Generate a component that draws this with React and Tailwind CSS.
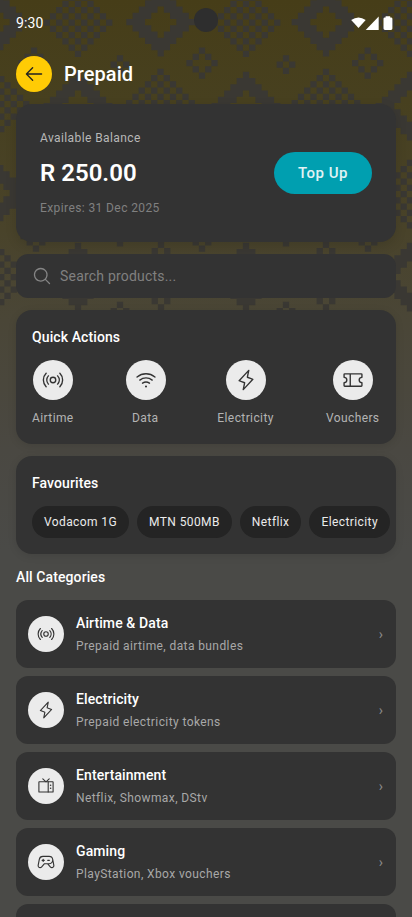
import React from "react";
import {
  PiArrowLeft,
  PiMagnifyingGlass,
  PiBroadcast,
  PiWifiHigh,
  PiLightning,
  PiTicket,
  PiGameController,
} from "react-icons/pi";

const CELL = 6.25;

const inShape = {
  checker: (x, y) => Math.abs(x) + Math.abs(y) <= 5 && Math.abs(x + y) % 2 === 1,
  solid: (x, y) => Math.abs(x) + Math.abs(y) <= 5 && Math.abs(x) + Math.abs(y) > 2,
  ring: (x, y) => Math.abs(x) + Math.abs(y) === 2,
  plus: (x, y) => Math.abs(x) + Math.abs(y) === 1,
};

const motifs = [
  ["solid", -6, 22], ["checker", 78, 22.5], ["solid", 160.7, 22], ["checker", 246, 22.5], ["solid", 326, 22], ["checker", 410, 22.5],
  ["ring", 34, 63], ["plus", 120, 64.5], ["ring", 202, 63], ["plus", 286, 64.5], ["ring", 367.7, 63],
  ["checker", -5, 104], ["solid", 78, 106], ["checker", 160.5, 103], ["solid", 246, 106], ["checker", 326, 103], ["solid", 410, 106],
  ["solid", -6, 193], ["checker", 410, 194],
  ["ring", 36, 236], ["plus", 120, 237], ["ring", 202, 236], ["plus", 286, 237], ["ring", 368, 236],
  ["checker", -5, 277], ["solid", 78, 277], ["checker", 161, 276], ["solid", 246, 277], ["checker", 326, 276], ["solid", 410, 277],
  ["plus", 120, 311], ["plus", 286, 311],
];

function cellPath([shape, cx, cy]) {
  let d = "";
  for (let y = -5; y <= 5; y++)
    for (let x = -5; x <= 5; x++)
      if (inShape[shape](x, y))
        d += `M${cx + (x - 0.5) * CELL} ${cy + (y - 0.5) * CELL}h${CELL}v${CELL}h-${CELL}z`;
  return d;
}

function Pattern() {
  return (
    <svg className="absolute left-0 top-0" width="412" height="320" viewBox="0 0 412 320">
      <path d={motifs.map(cellPath).join("")} fill="#3a3833" />
    </svg>
  );
}

function TvIcon({ size }) {
  return (
    <svg width={size} height={size} viewBox="0 0 18 18" fill="none" stroke="currentColor" strokeWidth="1.1" strokeLinejoin="round" strokeLinecap="round">
      <rect x="1.9" y="4.8" width="14.2" height="10.2" rx="0.3" />
      <path d="M11.2 4.8v10.2M5.8 1.9L9 4.8l3.2-2.9" />
      <circle cx="13.6" cy="8.3" r="0.8" fill="currentColor" stroke="none" />
      <circle cx="13.6" cy="11.3" r="0.8" fill="currentColor" stroke="none" />
    </svg>
  );
}

const actions = [
  ["Airtime", PiBroadcast],
  ["Data", PiWifiHigh],
  ["Electricity", PiLightning],
  ["Vouchers", PiTicket],
];

const favourites = ["Vodacom 1G", "MTN 500MB", "Netflix", "Electricity"];

const categories = [
  ["Airtime & Data", "Prepaid airtime, data bundles", PiBroadcast],
  ["Electricity", "Prepaid electricity tokens", PiLightning],
  ["Entertainment", "Netflix, Showmax, DStv", TvIcon],
  ["Gaming", "PlayStation, Xbox vouchers", PiGameController],
];

function StatusBar() {
  return (
    <div className="flex h-12 items-center justify-between pl-4 pr-[18px]">
      <span className="-mt-0.5 text-[14px] leading-5 tracking-[0.14px] text-white">9:30</span>
      <svg width="43" height="16" viewBox="0 0 43 16" fill="#fff" className="mt-[-2px]">
        <path d="M0.2 5Q7.5 0 14.7 5L7.5 13.1z" />
        <path d="M27.7 1.6v13.4H14.7z" />
        <path d="M34.6 1.2h4.6v1.2h.8q1.4 0 1.4 1.4v9.8q0 1.4-1.4 1.4h-6q-1.5 0-1.5-1.4V3.8q0-1.4 1.4-1.4h.7z" />
      </svg>
    </div>
  );
}

export default function App() {
  return (
    <div className="relative h-[917px] w-[412px] overflow-hidden bg-[linear-gradient(180deg,#463d18_0px,#47401f_100px,#49432a_230px,#4a4637_320px,#4a4842_450px,#4a4a47_550px,#4a4a47_917px)] font-['Roboto',sans-serif] text-white">
      <Pattern />
      <div className="absolute left-[194px] top-2 size-6 rounded-full bg-[#2e2e2e]" />
      <div className="relative flex flex-col">
        <StatusBar />
        <header className="flex h-14 items-center gap-3 px-4 pb-1">
          <button className="flex size-9 items-center justify-center rounded-full bg-[#ffcb05] text-[#222]">
            <PiArrowLeft size={22} />
          </button>
          <h1 className="text-[20px] font-medium leading-6 tracking-[0.05px]">Prepaid</h1>
        </header>

        <main className="flex flex-col gap-3 px-4">
          <section className="flex h-[138px] items-center justify-between rounded-2xl bg-[#333] px-6 shadow-[0_4px_12px_rgba(0,0,0,0.12)]">
            <div className="flex flex-col">
              <span className="-mt-px text-[12px] leading-4 tracking-[0.4px] text-[#b8b8b8]">Available Balance</span>
              <span className="mt-[11px] text-[24px] font-semibold leading-8">R 250.00</span>
              <span className="mt-[11px] text-[12px] leading-4 tracking-[0.4px] text-[#808080]">Expires: 31 Dec 2025</span>
            </div>
            <button className="h-[42px] w-[98px] rounded-full bg-[#009fb0] text-[15px] font-medium tracking-[0.5px] text-[#e0f3f5]">Top Up</button>
          </section>

          <section className="flex h-11 items-center gap-2 rounded-xl bg-[#333] pl-4 text-[#858585]">
            <PiMagnifyingGlass size={20} />
            <span className="text-[14px] leading-5 tracking-[0.2px] text-[#808080]">Search products...</span>
          </section>

          <section className="flex h-[134px] flex-col rounded-2xl bg-[#333] px-4 pt-[17px] shadow-[0_2px_8px_rgba(0,0,0,0.1)]">
            <h2 className="text-[14px] font-medium leading-5 tracking-[0.1px]">Quick Actions</h2>
            <div className="mt-[13px] flex justify-between">
              {actions.map(([label, Icon], i) => (
                <div key={label} className="flex flex-col items-center gap-[10px]">
                  <span className="flex size-10 items-center justify-center rounded-full bg-[#ebebeb] text-[#333]">
                    <Icon size={22} />
                  </span>
                  <span className={`text-[12px] leading-4 tracking-[0.4px] text-[#b3b3b3] ${i > 0 ? "-ml-[0.5px] mr-[0.5px]" : ""}`}>{label}</span>
                </div>
              ))}
            </div>
          </section>

          <section className="flex h-[98px] flex-col overflow-hidden rounded-2xl bg-[#333] pl-4 pt-[17px] shadow-[0_2px_8px_rgba(0,0,0,0.1)]">
            <h2 className="text-[14px] font-medium leading-5 tracking-[0.1px]">Favourites</h2>
            <div className="mt-[13px] flex gap-2">
              {favourites.map((name) => (
                <span key={name} className="flex h-8 shrink-0 items-center rounded-full bg-[#242424] px-3 text-[12px] tracking-[0.4px] text-[#ebebeb]">
                  {name}
                </span>
              ))}
            </div>
          </section>

          <h2 className="mt-[1px] text-[14px] font-medium leading-5 tracking-[0.1px]">All Categories</h2>

          <div className="mt-[1px] flex flex-col gap-2">
            {categories.map(([title, detail, Icon]) => (
              <div key={title} className="flex h-[68px] items-center rounded-xl bg-[#333] pl-3 pr-[13px]">
                <span className="flex size-9 shrink-0 items-center justify-center rounded-full bg-[#ebebeb] text-[#333]">
                  <Icon size={18} />
                </span>
                <div className="-mt-0.5 ml-3 flex flex-1 flex-col gap-[5px]">
                  <span className="text-[14px] font-medium leading-5 tracking-[0.1px]">{title}</span>
                  <span className="text-[12px] leading-4 tracking-[0.4px] text-[#a8a8a8]">{detail}</span>
                </div>
                <span className="text-[14px] leading-5 text-[#8c8c8c]">›</span>
              </div>
            ))}
            <div className="h-[68px] rounded-xl bg-[#333]" />
          </div>
        </main>
      </div>
    </div>
  );
}
